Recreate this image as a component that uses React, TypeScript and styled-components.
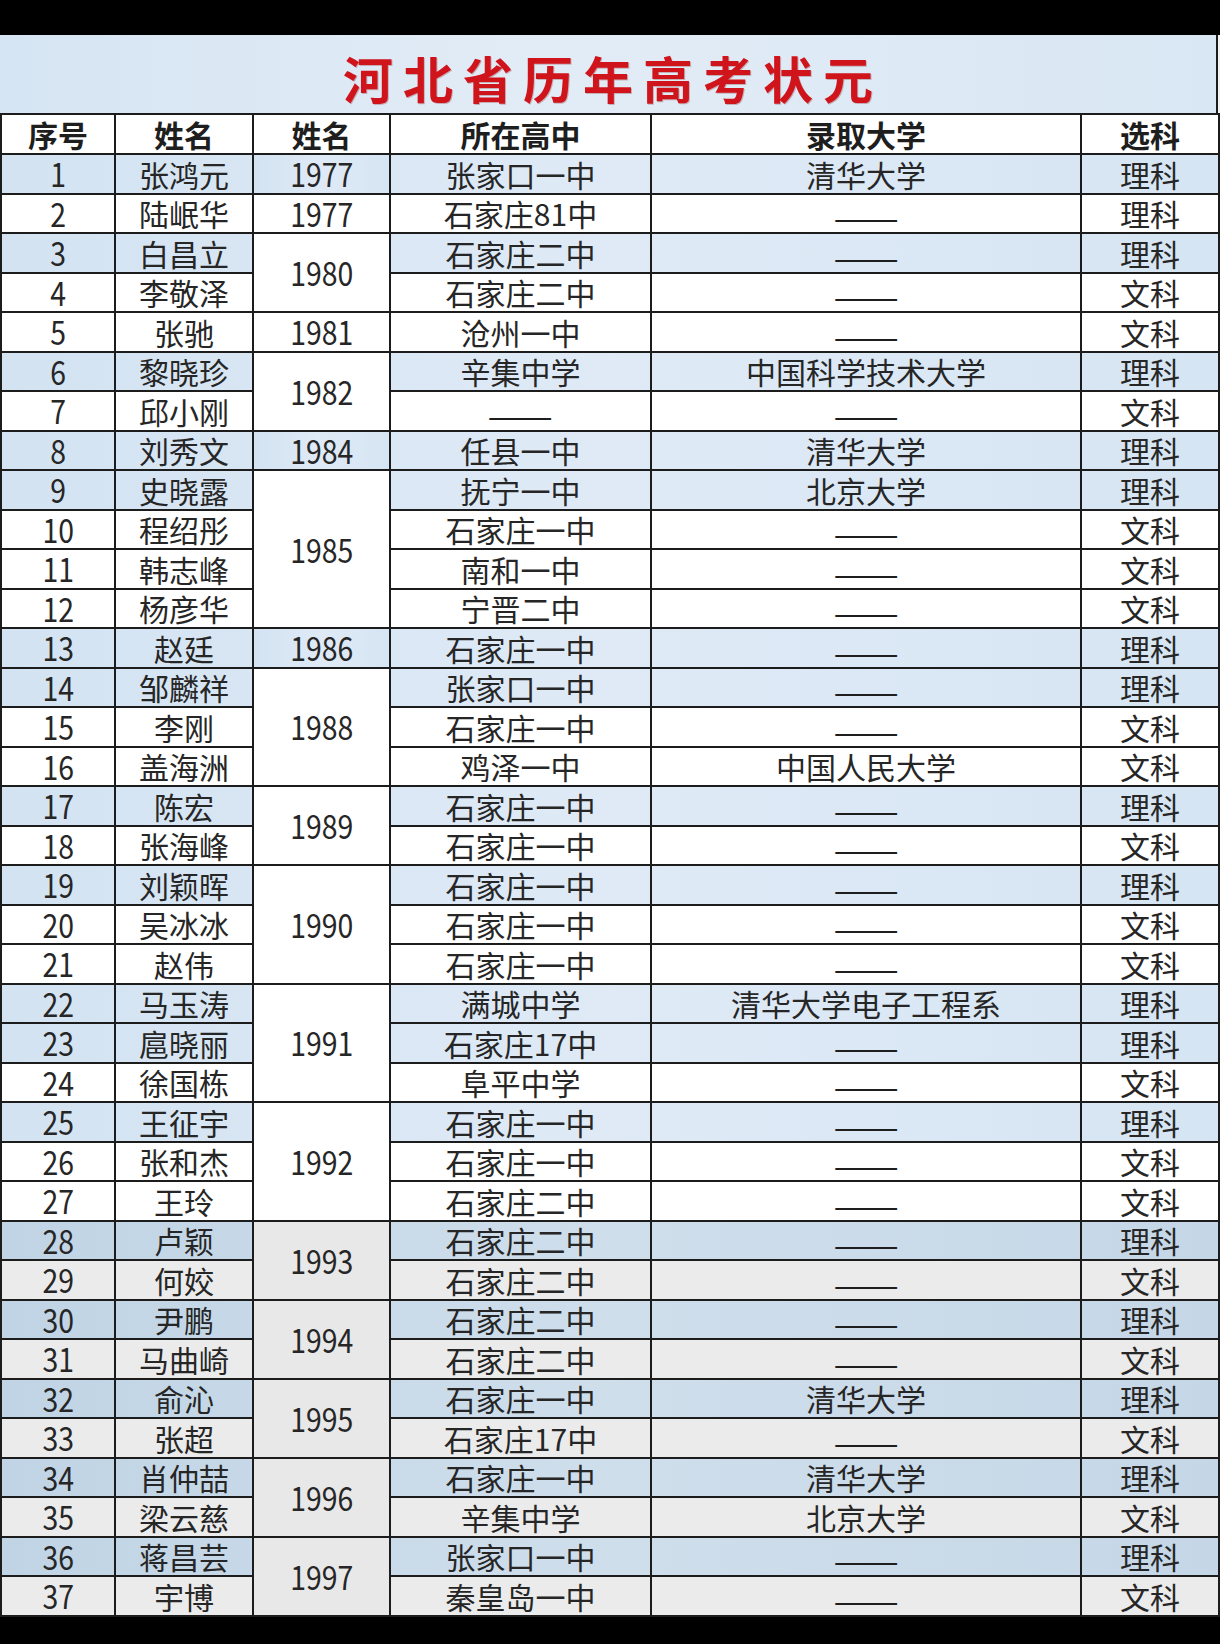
import React from "react";
import styled, { createGlobalStyle, css } from "styled-components";

type Row = {
  no: number;
  name: string;
  school: string;
  univ: string;
  subject: string;
  blue: boolean;
};

type Group = { year: number; rows: Row[]; blue?: boolean };

const DASH = "——";

const r = (
  no: number,
  name: string,
  school: string,
  univ: string,
  subject: string,
  blue = false
): Row => ({ no, name, school, univ, subject, blue });

const groups: Group[] = [
  { year: 1977, blue: true, rows: [r(1, "张鸿元", "张家口一中", "清华大学", "理科", true)] },
  { year: 1977, rows: [r(2, "陆岷华", "石家庄81中", DASH, "理科")] },
  {
    year: 1980,
    rows: [
      r(3, "白昌立", "石家庄二中", DASH, "理科", true),
      r(4, "李敬泽", "石家庄二中", DASH, "文科"),
    ],
  },
  { year: 1981, rows: [r(5, "张驰", "沧州一中", DASH, "文科")] },
  {
    year: 1982,
    rows: [
      r(6, "黎晓珍", "辛集中学", "中国科学技术大学", "理科", true),
      r(7, "邱小刚", DASH, DASH, "文科"),
    ],
  },
  { year: 1984, blue: true, rows: [r(8, "刘秀文", "任县一中", "清华大学", "理科", true)] },
  {
    year: 1985,
    rows: [
      r(9, "史晓露", "抚宁一中", "北京大学", "理科", true),
      r(10, "程绍彤", "石家庄一中", DASH, "文科"),
      r(11, "韩志峰", "南和一中", DASH, "文科"),
      r(12, "杨彦华", "宁晋二中", DASH, "文科"),
    ],
  },
  { year: 1986, blue: true, rows: [r(13, "赵廷", "石家庄一中", DASH, "理科", true)] },
  {
    year: 1988,
    rows: [
      r(14, "邹麟祥", "张家口一中", DASH, "理科", true),
      r(15, "李刚", "石家庄一中", DASH, "文科"),
      r(16, "盖海洲", "鸡泽一中", "中国人民大学", "文科"),
    ],
  },
  {
    year: 1989,
    rows: [
      r(17, "陈宏", "石家庄一中", DASH, "理科", true),
      r(18, "张海峰", "石家庄一中", DASH, "文科"),
    ],
  },
  {
    year: 1990,
    rows: [
      r(19, "刘颖晖", "石家庄一中", DASH, "理科", true),
      r(20, "吴冰冰", "石家庄一中", DASH, "文科"),
      r(21, "赵伟", "石家庄一中", DASH, "文科"),
    ],
  },
  {
    year: 1991,
    rows: [
      r(22, "马玉涛", "满城中学", "清华大学电子工程系", "理科", true),
      r(23, "扈晓丽", "石家庄17中", DASH, "理科", true),
      r(24, "徐国栋", "阜平中学", DASH, "文科"),
    ],
  },
  {
    year: 1992,
    rows: [
      r(25, "王征宇", "石家庄一中", DASH, "理科", true),
      r(26, "张和杰", "石家庄一中", DASH, "文科"),
      r(27, "王玲", "石家庄二中", DASH, "文科"),
    ],
  },
  {
    year: 1993,
    rows: [
      r(28, "卢颖", "石家庄二中", DASH, "理科", true),
      r(29, "何姣", "石家庄二中", DASH, "文科"),
    ],
  },
  {
    year: 1994,
    rows: [
      r(30, "尹鹏", "石家庄二中", DASH, "理科", true),
      r(31, "马曲崎", "石家庄二中", DASH, "文科"),
    ],
  },
  {
    year: 1995,
    rows: [
      r(32, "俞沁", "石家庄一中", "清华大学", "理科", true),
      r(33, "张超", "石家庄17中", DASH, "文科"),
    ],
  },
  {
    year: 1996,
    rows: [
      r(34, "肖仲喆", "石家庄一中", "清华大学", "理科", true),
      r(35, "梁云慈", "辛集中学", "北京大学", "文科"),
    ],
  },
  {
    year: 1997,
    rows: [
      r(36, "蒋昌芸", "张家口一中", DASH, "理科", true),
      r(37, "宇博", "秦皇岛一中", DASH, "文科"),
    ],
  },
];

const headers = ["序号", "姓名", "姓名", "所在高中", "录取大学", "选科"];
const colWidths = [114, 138, 137, 261, 430, 138];

// rows from 28 on sit under the grey wash of the original capture
const DIM_FROM = 28;

const GlobalStyle = createGlobalStyle`
  html, body {
    margin: 0;
    padding: 0;
    background: #000;
  }
  body {
    font-family: "Noto Sans CJK SC", "Noto Sans", sans-serif;
  }
`;

const Screen = styled.div`
  width: 1220px;
  height: 1644px;
  padding-top: 35px;
  box-sizing: border-box;
  background: #000;
`;

const Sheet = styled.div`
  width: 1218px;
  background: #fff;
  border-right: 2px solid #f2f2f2;
`;

const TitleBar = styled.div`
  height: 78px;
  display: flex;
  align-items: center;
  justify-content: center;
  background: linear-gradient(90deg, #d6e5f3 0%, #e2ecf6 45%, #d9e7f4 100%);
  border-right: 2px solid #1c1c1c;
  box-sizing: border-box;
`;

const Title = styled.h1`
  margin: 0 -10px 0 0;
  padding-top: 6px;
  font-family: "Noto Sans CJK SC", sans-serif;
  font-size: 50px;
  font-weight: 700;
  letter-spacing: 10px;
  line-height: 1;
  color: #d0141c;
  text-shadow: 1px 1px 0 rgba(120, 0, 0, 0.25);
`;

const Table = styled.table`
  width: 1218px;
  border-collapse: collapse;
  table-layout: fixed;
  color: #262626;
  font-size: 30px;
`;

const HeadRow = styled.tr`
  height: 40px;
  background: #fff;
`;

const HeadCell = styled.th`
  border: 2px solid #1c1c1c;
  padding: 0;
  font-weight: 700;
  line-height: 1;
  text-align: center;
  vertical-align: middle;
  color: #1e1e1e;
`;

const blueBg = css`
  background: linear-gradient(90deg, #d3e3f2 0%, #dfeaf6 50%, #d6e5f3 100%);
`;
const dimBlueBg = css`
  background: linear-gradient(90deg, #c0d4e5 0%, #cfdeeb 50%, #c5d7e7 100%);
`;

const BodyRow = styled.tr<{ $blue: boolean; $dim: boolean }>`
  height: 39.5px;
  ${(p) =>
    p.$blue ? (p.$dim ? dimBlueBg : blueBg) : `background: ${p.$dim ? "#ebebeb" : "#fff"};`}
`;

const Cell = styled.td<{ $tone?: "blue" | "white" | "dim" }>`
  border: 2px solid #1c1c1c;
  padding: 0;
  line-height: 1;
  text-align: center;
  vertical-align: middle;
  white-space: nowrap;
  ${(p) => p.$tone === "blue" && blueBg}
  ${(p) => p.$tone === "white" && "background: #fff;"}
  ${(p) => p.$tone === "dim" && "background: #e8e8e8;"}
`;

const Num = styled.span`
  display: inline-block;
  font-size: 33px;
  transform: scaleX(0.86);
`;

const Dash = styled.span`
  display: inline-block;
  color: #1e1e1e;
  transform: translateY(3px) scaleX(1.3);
`;

function CellText({ value }: { value: string }) {
  if (value === DASH) return <Dash>{value}</Dash>;
  return <>{value}</>;
}

export default function App() {
  return (
    <>
      <GlobalStyle />
      <Screen>
        <Sheet>
          <TitleBar>
            <Title>河北省历年高考状元</Title>
          </TitleBar>
          <Table>
            <colgroup>
              {colWidths.map((w, i) => (
                <col key={i} style={{ width: w }} />
              ))}
            </colgroup>
            <thead>
              <HeadRow>
                {headers.map((h, i) => (
                  <HeadCell key={i}>{h}</HeadCell>
                ))}
              </HeadRow>
            </thead>
            <tbody>
              {groups.map((g) =>
                g.rows.map((row, idx) => {
                  const dim = row.no >= DIM_FROM;
                  const tone = g.blue ? "blue" : dim ? "dim" : "white";
                  return (
                    <BodyRow key={row.no} $blue={row.blue} $dim={dim}>
                      <Cell>
                        <Num>{row.no}</Num>
                      </Cell>
                      <Cell>{row.name}</Cell>
                      {idx === 0 && (
                        <Cell rowSpan={g.rows.length} $tone={tone}>
                          <Num>{g.year}</Num>
                        </Cell>
                      )}
                      <Cell>
                        <CellText value={row.school} />
                      </Cell>
                      <Cell>
                        <CellText value={row.univ} />
                      </Cell>
                      <Cell>{row.subject}</Cell>
                    </BodyRow>
                  );
                })
              )}
            </tbody>
          </Table>
        </Sheet>
      </Screen>
    </>
  );
}
